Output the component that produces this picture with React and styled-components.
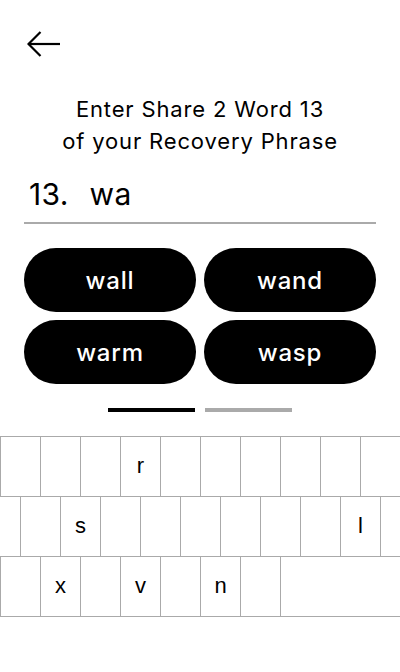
import React from "react";
import styled, { createGlobalStyle } from "styled-components";

const Global = createGlobalStyle`
  html, body { margin: 0; padding: 0; background: #fff; }
  body { font-family: Inter, "Noto Sans", sans-serif; color: #000; }
`;

const Screen = styled.div`
  width: 400px;
  height: 672px;
  display: flex;
  flex-direction: column;
  background: #fff;
  overflow: hidden;
`;

const Header = styled.div`
  height: 88px;
  display: flex;
  align-items: center;
  padding-left: 27px;
  box-sizing: border-box;
`;

const BackButton = styled.button`
  border: 0;
  background: none;
  padding: 0;
  width: 34px;
  height: 28px;
  display: flex;
  align-items: center;
  cursor: pointer;
`;

const Title = styled.h1`
  margin: 5px 0 0;
  font-size: 22px;
  line-height: 32px;
  font-weight: 400;
  text-align: center;
  letter-spacing: 0.85px;
`;

const InputRow = styled.div`
  margin: 12px 24px 0;
  height: 55px;
  border-bottom: 2px solid #aaa;
  display: flex;
  align-items: center;
  gap: 21px;
  padding-left: 5px;
  padding-bottom: 4px;
  box-sizing: border-box;
  font-size: 30px;
  font-weight: 400;
  letter-spacing: 0.3px;
`;

const Suggestions = styled.div`
  margin: 24px 24px 0;
  display: grid;
  grid-template-columns: 1fr 1fr;
  gap: 8px;
`;

const Chip = styled.button`
  height: 64px;
  border-radius: 32px;
  border: 0;
  background: #000;
  color: #fff;
  font-family: Inter, "Noto Sans", sans-serif;
  font-size: 24px;
  font-weight: 500;
  letter-spacing: 0.8px;
  cursor: pointer;
`;

const Progress = styled.div`
  margin-top: 24px;
  display: flex;
  justify-content: center;
  gap: 10px;
`;

const Bar = styled.div`
  width: 87px;
  height: 4px;
  background: ${(p) => (p.$active ? "#000" : "#aaa")};
`;

const Keyboard = styled.div`
  margin-top: 24px;
  border-top: 1px solid #aaa;
  display: flex;
  flex-direction: column;
`;

const KeyRow = styled.div`
  display: flex;
  height: 60px;
  margin-left: ${(p) => p.$offset || 0}px;
  border-bottom: 1px solid #aaa;
  box-sizing: border-box;
`;

const Key = styled.div`
  flex: 0 0 ${(p) => p.$w || 40}px;
  box-sizing: border-box;
  border-left: 1px solid #aaa;
  display: flex;
  align-items: center;
  justify-content: center;
  font-family: "Liberation Sans", Arial, sans-serif;
  font-size: 22px;
  -webkit-font-smoothing: none;
  padding-bottom: 2px;
`;

const ArrowLeft = () => (
  <svg width="34" height="28" viewBox="0 0 34 28" fill="none">
    <path d="M1.5 14H33" stroke="#000" strokeWidth="2.2" />
    <path d="M13.5 2L1.5 14L13.5 26" stroke="#000" strokeWidth="2.2" />
  </svg>
);

const row1 = ["", "", "", "r", "", "", "", "", "", "", ""];
const row2 = ["", "", "s", "", "", "", "", "", "", "l", ""];
const row3 = ["", "x", "", "v", "", "n", ""];

export default function App() {
  return (
    <Screen>
      <Global />
      <Header>
        <BackButton aria-label="Back">
          <ArrowLeft />
        </BackButton>
      </Header>
      <Title>
        Enter Share 2 Word 13
        <br />
        of your Recovery Phrase
      </Title>
      <InputRow>
        <span>13.</span>
        <span>wa</span>
      </InputRow>
      <Suggestions>
        {["wall", "wand", "warm", "wasp"].map((w) => (
          <Chip key={w}>{w}</Chip>
        ))}
      </Suggestions>
      <Progress>
        <Bar $active />
        <Bar />
      </Progress>
      <Keyboard>
        <KeyRow>
          {row1.map((k, i) => (
            <Key key={i}>{k}</Key>
          ))}
        </KeyRow>
        <KeyRow $offset={-20}>
          {row2.map((k, i) => (
            <Key key={i}>{k}</Key>
          ))}
        </KeyRow>
        <KeyRow>
          {row3.map((k, i) => (
            <Key key={i}>{k}</Key>
          ))}
          <Key $w={130} />
        </KeyRow>
      </Keyboard>
    </Screen>
  );
}
